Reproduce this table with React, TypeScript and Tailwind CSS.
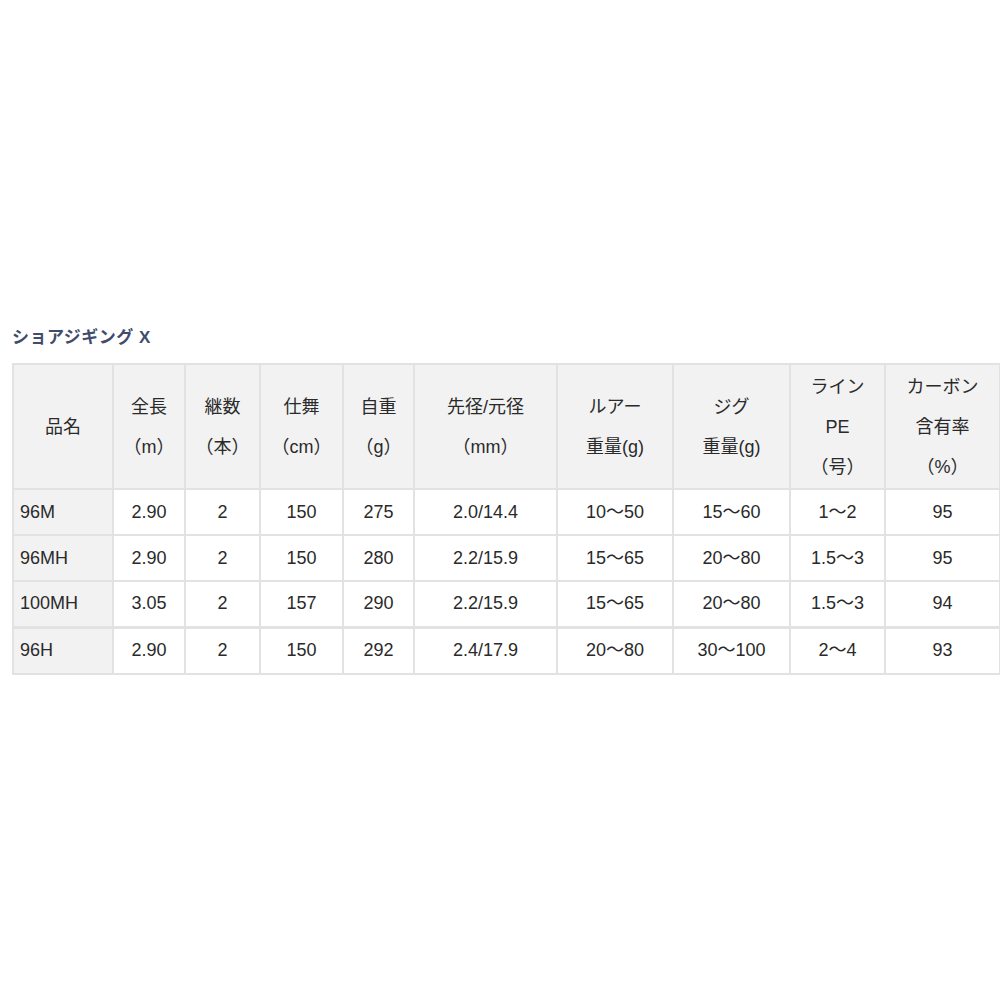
import React from 'react'

const COLS = [100, 72, 75, 83, 71, 143, 116, 117, 95, 115]

const HEADERS: string[][] = [
  ['品名'],
  ['全長', '（m）'],
  ['継数', '（本）'],
  ['仕舞', '（cm）'],
  ['自重', '（g）'],
  ['先径/元径', '（mm）'],
  ['ルアー', '重量(g)'],
  ['ジグ', '重量(g)'],
  ['ライン', 'PE', '（号）'],
  ['カーボン', '含有率', '（%）'],
]

const ROWS: string[][] = [
  ['96M', '2.90', '2', '150', '275', '2.0/14.4', '10～50', '15～60', '1～2', '95'],
  ['96MH', '2.90', '2', '150', '280', '2.2/15.9', '15～65', '20～80', '1.5～3', '95'],
  ['100MH', '3.05', '2', '157', '290', '2.2/15.9', '15～65', '20～80', '1.5～3', '94'],
  ['96H', '2.90', '2', '150', '292', '2.4/17.9', '20～80', '30～100', '2～4', '93'],
]

export default function App() {
  return (
    <div
      className="w-[1000px] h-[1000px] bg-white pt-[325px] pl-[12px] text-[#2a2a2a]"
      style={{ fontFamily: '"Liberation Sans", "Noto Sans CJK JP", sans-serif' }}
    >
      <h2 className="text-[17px] leading-[26px] text-[#3f4c6b] font-semibold tracking-[0.5px] mb-[12px]">
        ショアジギング X
      </h2>
      <table className="table-fixed border-collapse w-[987px] text-[18px]">
        <colgroup>
          {COLS.map((w, i) => (
            <col key={i} style={{ width: w }} />
          ))}
        </colgroup>
        <thead>
          <tr className="h-[125px] bg-[#f2f2f2]">
            {HEADERS.map((lines, i) => (
              <th key={i} className="border-2 border-[#e2e2e2] font-normal text-center align-middle leading-[40px]">
                {lines.map((l, j) => (
                  <div key={j}>{l}</div>
                ))}
              </th>
            ))}
          </tr>
        </thead>
        <tbody>
          {ROWS.map((row, r) => (
            <tr key={r} className={r === 3 ? 'h-[47px] border-t-[3px] border-[#e2e2e2]' : 'h-[46px]'}>
              {row.map((cell, i) => (
                <td
                  key={i}
                  className={
                    i === 0
                      ? 'border-2 border-[#e2e2e2] bg-[#f2f2f2] text-left pl-[6px]'
                      : 'border-2 border-[#e2e2e2] bg-white text-center'
                  }
                >
                  {cell}
                </td>
              ))}
            </tr>
          ))}
        </tbody>
      </table>
    </div>
  )
}
